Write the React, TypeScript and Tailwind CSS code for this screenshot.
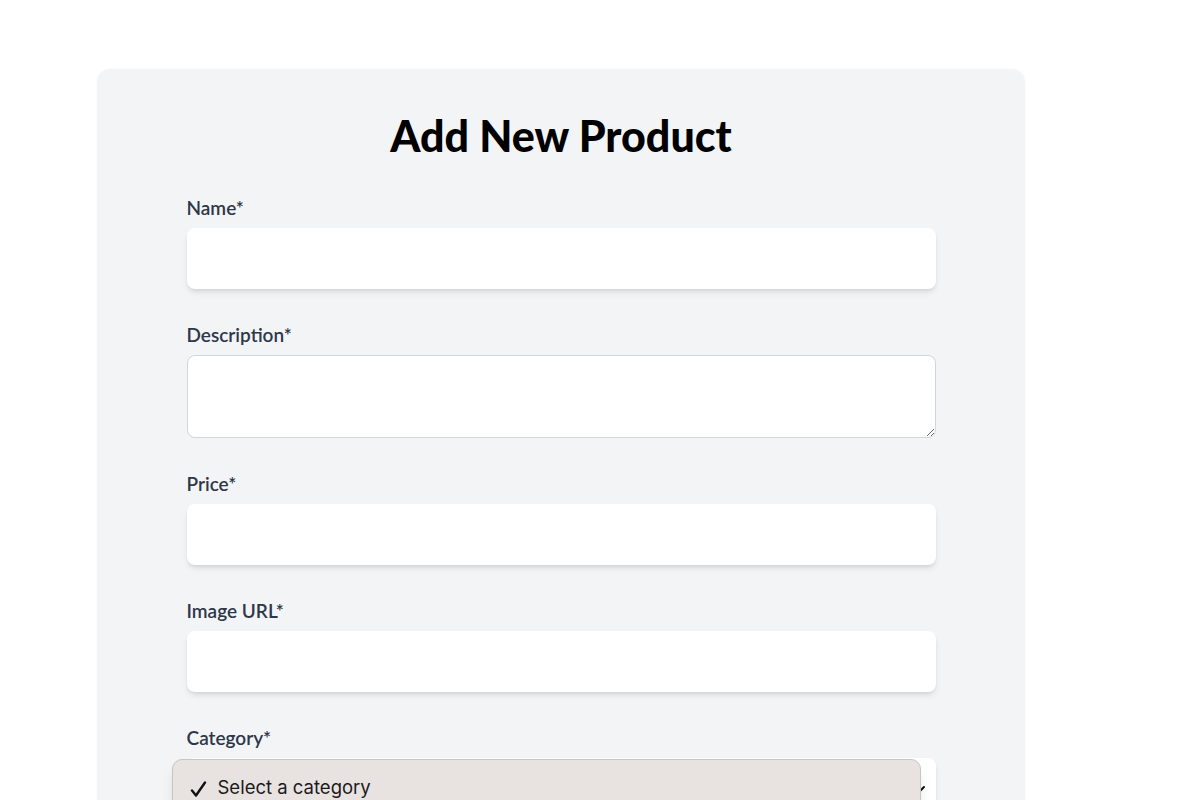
import { useState } from "react";

const fieldClass =
  "block w-full h-[61px] rounded-lg bg-white px-4 text-lg text-gray-800 shadow-md outline-none";

function Field({ label, children }: { label: string; children: React.ReactNode }) {
  return (
    <div className="mb-[30px]">
      <label className="mb-2 block h-7 pt-[2px] text-[19px] font-semibold leading-7 text-[#2d3748]">
        {label}
      </label>
      {children}
    </div>
  );
}

export default function App() {
  const [form, setForm] = useState({ name: "", description: "", price: "", image: "" });

  return (
    <div className="min-h-screen overflow-hidden bg-white font-['Lato',sans-serif]">
      <div className="ml-[98px] mt-[69px] w-[926px] rounded-xl bg-gray-100 pb-20 pt-[43px] shadow-sm">
        <h1 className="mb-8 text-center text-[43px] leading-[48px] font-black text-black">
          Add New Product
        </h1>

        <form className="mx-auto w-[749px]">
          <Field label="Name*">
            <input
              className={fieldClass}
              value={form.name}
              onChange={(e) => setForm({ ...form, name: e.target.value })}
            />
          </Field>

          <Field label="Description*">
            <textarea
              className="block h-[83px] w-full rounded-lg border border-gray-300 bg-white px-4 py-2 text-lg text-gray-800 outline-none"
              value={form.description}
              onChange={(e) => setForm({ ...form, description: e.target.value })}
            />
          </Field>

          <Field label="Price*">
            <input
              className={fieldClass}
              value={form.price}
              onChange={(e) => setForm({ ...form, price: e.target.value })}
            />
          </Field>

          <Field label="Image URL*">
            <input
              className={fieldClass}
              value={form.image}
              onChange={(e) => setForm({ ...form, image: e.target.value })}
            />
          </Field>

          <Field label="Category*">
            <div className="relative">
              <div className="flex h-[61px] w-full items-center justify-end rounded-lg bg-white px-[10px] shadow-md">
                <svg width="14" height="14" viewBox="0 0 14 14" fill="none">
                  <path d="M2 5l5 5 5-5" stroke="#111" strokeWidth="2" strokeLinecap="round" strokeLinejoin="round" />
                </svg>
              </div>

              {/* open native-style dropdown */}
              <div className="absolute left-[-15px] top-[1px] w-[749px] rounded-[10px] border border-[#c8c4c3] bg-[#e8e2e1] pb-[10px] pt-[15px] shadow-lg">
                <div className="flex items-center gap-[11px] pl-[17px] font-['Inter',sans-serif] text-[18.5px] leading-6 text-[#1a1a1a]">
                  <svg width="17" height="17" viewBox="0 0 17 17" fill="none" className="mt-[4px]">
                    <path d="M2 9.5l4 5L15 1.5" stroke="#111" strokeWidth="2.4" strokeLinecap="round" strokeLinejoin="round" />
                  </svg>
                  <span>Select a category</span>
                </div>
                <div className="h-24" />
              </div>
            </div>
          </Field>
        </form>
      </div>
    </div>
  );
}
